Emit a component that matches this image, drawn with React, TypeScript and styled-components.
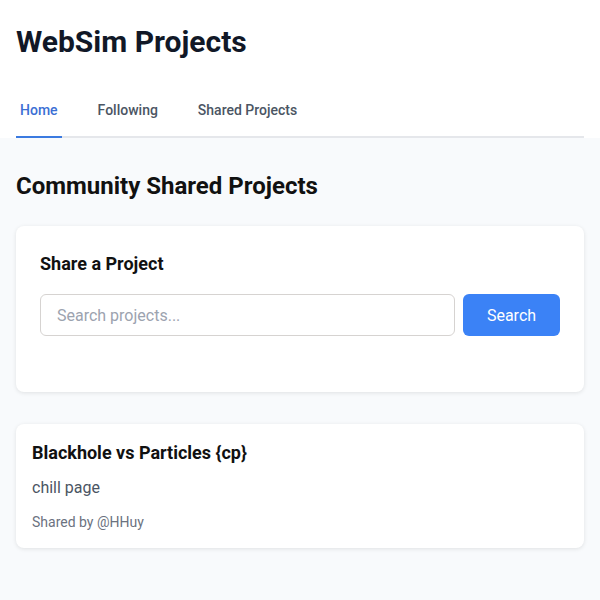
import React from "react";
import styled, { createGlobalStyle } from "styled-components";

const GlobalStyle = createGlobalStyle`
    html, body {
        margin: 0;
        padding: 0;
        background: #f8fafc;
        font-family: Roboto, "Liberation Sans", sans-serif;
    }
`;

const Header = styled.header`
    background: #ffffff;
    padding: 24px 16px 0;
`;

const Title = styled.h1`
    margin: 0 0 25px;
    font-size: 30px;
    line-height: 36px;
    font-weight: 700;
    color: #111827;
`;

const Nav = styled.nav`
    display: flex;
    gap: 32px;
    border-bottom: 2px solid #e5e7eb;
`;

const Tab = styled.a<{ $active?: boolean }>`
    padding: 15px 4px 15px;
    margin-bottom: -2px;
    font-size: 14px;
    line-height: 21px;
    font-weight: 500;
    text-decoration: none;
    color: ${(p) => (p.$active ? "#3b6fd4" : "#4b5563")};
    border-bottom: 2px solid ${(p) => (p.$active ? "#3b7ae0" : "transparent")};
`;

const Main = styled.main`
    padding: 32px 16px;
    display: flex;
    flex-direction: column;
    gap: 32px;
`;

const Section = styled.section`
    display: flex;
    flex-direction: column;
    gap: 24px;
`;

const SectionTitle = styled.h2`
    margin: 0;
    font-size: 24px;
    line-height: 32px;
    font-weight: 700;
    color: #111;
`;

const Card = styled.div<{ $pad: number }>`
    background: #ffffff;
    border-radius: 8px;
    box-shadow: 0 1px 4px rgba(0, 0, 0, 0.1);
    padding: ${(p) => p.$pad}px;
`;

const CardTitle = styled.h3`
    margin: 0 0 16px;
    font-size: 18px;
    line-height: 28px;
    font-weight: 700;
    color: #111;
`;

const SearchRow = styled.div`
    display: flex;
    gap: 8px;
    margin-bottom: 32px;
`;

const SearchInput = styled.input`
    flex: 1;
    height: 42px;
    box-sizing: border-box;
    padding: 0 16px;
    border: 1px solid #d6d3d1;
    border-radius: 6px;
    font-family: inherit;
    font-size: 16px;
    color: #111;
    outline: none;

    &::placeholder {
        color: #9ca3af;
    }
`;

const Button = styled.button`
    width: 97px;
    height: 42px;
    border: none;
    border-radius: 6px;
    background: #3b82f6;
    color: #ffffff;
    font-family: inherit;
    font-size: 16px;
`;

const ProjectTitle = styled.h3`
    margin: 0 0 10px;
    font-size: 18px;
    line-height: 26px;
    font-weight: 700;
    color: #111;
`;

const Description = styled.p`
    margin: 0 0 12px;
    font-size: 16px;
    line-height: 24px;
    color: #4b5563;
`;

const Meta = styled.div`
    font-size: 14px;
    line-height: 20px;
    color: #6b7280;
`;

const projects = [
    { title: "Blackhole vs Particles {cp}", description: "chill page", author: "HHuy" },
];

export default function App() {
    return (
        <>
            <GlobalStyle />
            <Header>
                <Title>WebSim Projects</Title>
                <Nav>
                    <Tab $active>Home</Tab>
                    <Tab>Following</Tab>
                    <Tab>Shared Projects</Tab>
                </Nav>
            </Header>
            <Main>
                <Section>
                    <SectionTitle>Community Shared Projects</SectionTitle>
                    <Card $pad={24}>
                        <CardTitle>Share a Project</CardTitle>
                        <SearchRow>
                            <SearchInput placeholder="Search projects..." />
                            <Button>Search</Button>
                        </SearchRow>
                    </Card>
                </Section>
                {projects.map((p) => (
                    <Card $pad={16} key={p.title}>
                        <ProjectTitle>{p.title}</ProjectTitle>
                        <Description>{p.description}</Description>
                        <Meta>Shared by @{p.author}</Meta>
                    </Card>
                ))}
            </Main>
        </>
    );
}
